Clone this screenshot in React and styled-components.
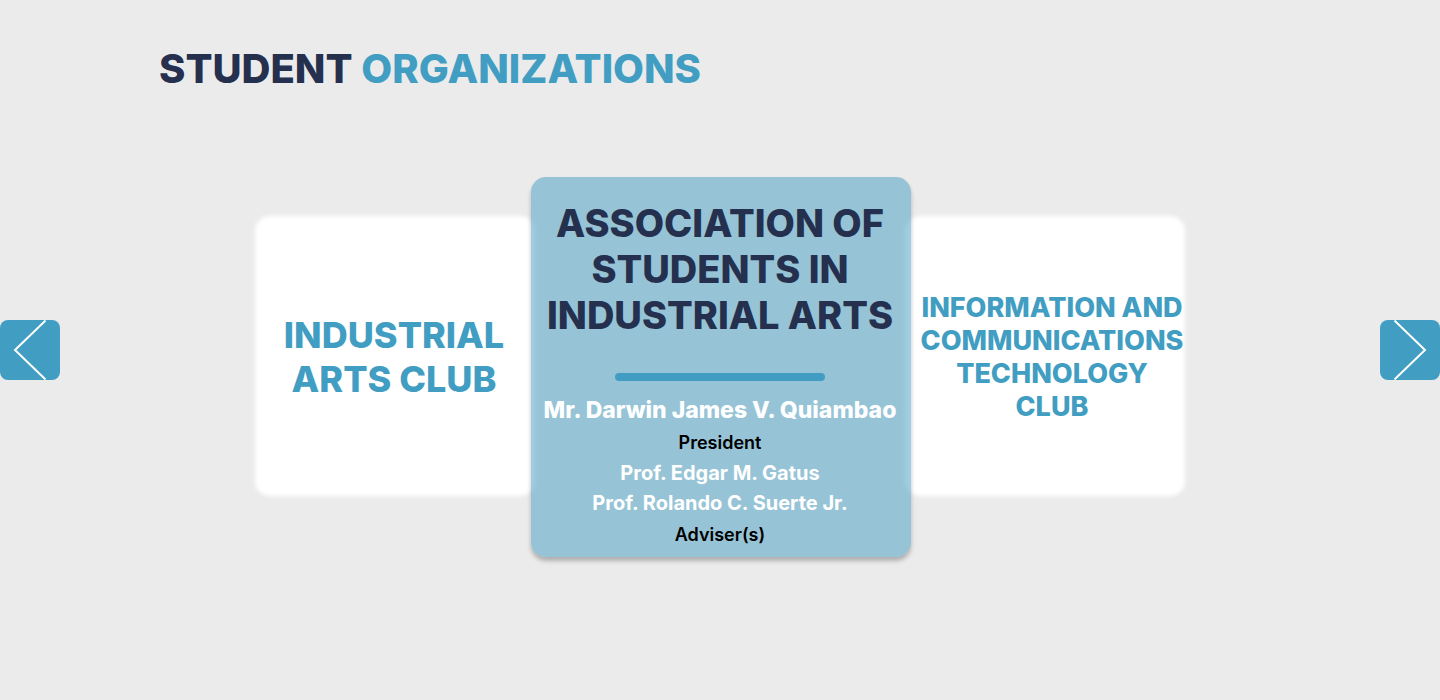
import React from "react";
import styled, { createGlobalStyle } from "styled-components";

const colors = {
  page: "#ebebeb",
  blue: "#419ec2",
  navy: "#25304f",
};

const GlobalStyle = createGlobalStyle`
  *, *::before, *::after { box-sizing: border-box; }
  body {
    margin: 0;
    background: ${colors.page};
    font-family: Inter, "Liberation Sans", sans-serif;
  }
  h1, h2, h3, p { margin: 0; }
`;

const Page = styled.main`
  display: grid;
  grid-template-columns: 60px minmax(0, 1fr) 60px;
  align-items: center;
  min-height: 100vh;
`;

const Section = styled.section`
  align-self: start;
  padding-top: 44px;
`;

const Title = styled.h1`
  padding-left: 99px;
  font-size: 40px;
  line-height: 50px;
  font-weight: 800;
  color: ${colors.navy};
`;

const Accent = styled.span`
  color: ${colors.blue};
`;

const Carousel = styled.div`
  display: flex;
  justify-content: center;
  align-items: flex-start;
  padding-top: 83px;
`;

const SideCard = styled.article`
  position: relative;
  display: flex;
  align-items: center;
  justify-content: center;
  flex: none;
  width: 280px;
  height: 280px;
  margin-top: 39px;
  padding: ${(p) => (p.$inset ? "2px 0 0 14px" : "2px 2px 0 0")};

  &::before {
    content: "";
    position: absolute;
    inset: 0;
    border-radius: 15px;
    background: #fff;
    filter: blur(2px);
  }
`;

const SideName = styled.h2`
  position: relative;
  font-size: ${(p) => (p.$small ? "27px" : "36px")};
  line-height: ${(p) => (p.$small ? "33px" : "44px")};
  font-weight: 800;
  text-align: center;
  color: ${colors.blue};
`;

const FeaturedCard = styled.article`
  position: relative;
  z-index: 1;
  display: flex;
  flex-direction: column;
  align-items: center;
  flex: none;
  width: 380px;
  min-height: 380px;
  margin: 0 -6px 0 -4px;
  padding: 23px 2px 7px 0;
  border-radius: 15px;
  background: rgba(65, 158, 194, 0.5);
  box-shadow: 0 4px 4px rgba(0, 0, 0, 0.25);
  text-align: center;
`;

const FeaturedName = styled.h2`
  font-size: 38px;
  line-height: 46px;
  font-weight: 800;
  color: ${colors.navy};
`;

const Divider = styled.hr`
  width: 210px;
  height: 8px;
  margin: 35px 0 11px;
  border: 0;
  border-radius: 4px;
  background: ${colors.blue};
`;

const President = styled.h3`
  font-size: 23px;
  line-height: 36px;
  font-weight: 800;
  white-space: nowrap;
  color: #fff;
`;

const Adviser = styled.p`
  font-size: 20px;
  line-height: 30px;
  font-weight: 700;
  color: #fff;
`;

const Role = styled.p`
  font-size: 18px;
  line-height: 30px;
  font-weight: 600;
  color: #000;

  &:last-child {
    padding-top: 2px;
  }
`;

const ArrowButton = styled.button`
  display: block;
  width: 60px;
  height: 60px;
  padding: 0;
  border: 0;
  border-radius: 8px;
  background: ${colors.blue};
  overflow: hidden;
  cursor: pointer;

  svg {
    display: block;
  }
`;

function Arrow({ label, path }) {
  return (
    <ArrowButton type="button" aria-label={label}>
      <svg width="60" height="60" viewBox="0 0 60 60" fill="none" stroke="#fff" strokeWidth="2" aria-hidden="true">
        <path d={path} />
      </svg>
    </ArrowButton>
  );
}

export default function App() {
  return (
    <>
      <GlobalStyle />
      <Page>
        <Arrow label="Previous organization" path="M45.5 .5L15 30L45.5 59.5" />
        <Section>
          <Title>
            STUDENT <Accent>ORGANIZATIONS</Accent>
          </Title>
          <Carousel>
            <SideCard>
              <SideName>
                INDUSTRIAL
                <br />
                ARTS CLUB
              </SideName>
            </SideCard>
            <FeaturedCard>
              <FeaturedName>
                ASSOCIATION OF
                <br />
                STUDENTS IN
                <br />
                INDUSTRIAL ARTS
              </FeaturedName>
              <Divider />
              <President>Mr. Darwin James V. Quiambao</President>
              <Role>President</Role>
              <Adviser>Prof. Edgar M. Gatus</Adviser>
              <Adviser>Prof. Rolando C. Suerte Jr.</Adviser>
              <Role>Adviser(s)</Role>
            </FeaturedCard>
            <SideCard $inset>
              <SideName $small>
                INFORMATION AND
                <br />
                COMMUNICATIONS
                <br />
                TECHNOLOGY
                <br />
                CLUB
              </SideName>
            </SideCard>
          </Carousel>
        </Section>
        <Arrow label="Next organization" path="M14.5 .5L45 30L14.5 59.5" />
      </Page>
    </>
  );
}
